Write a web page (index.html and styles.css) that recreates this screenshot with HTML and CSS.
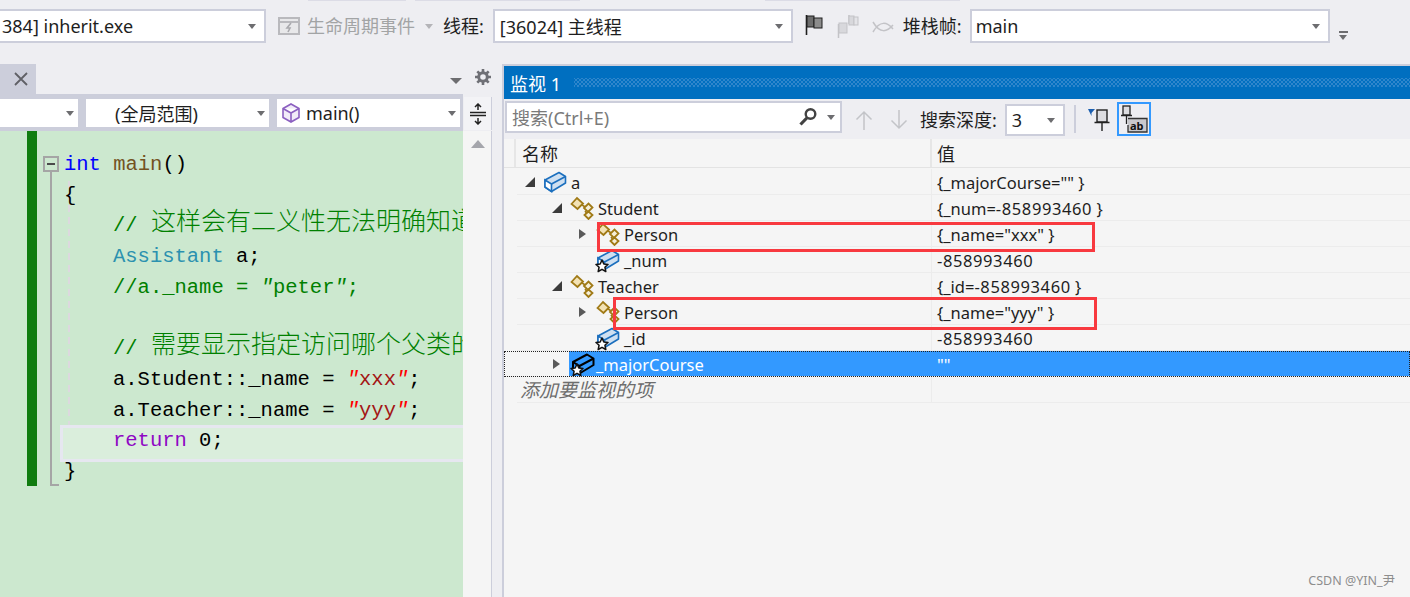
FILE: index.html
```html
<!DOCTYPE html>
<html lang="zh-CN">
<head>
<meta charset="utf-8">
<title>inherit.exe</title>
<link rel="stylesheet" href="styles.css">
</head>
<body>
<svg class="defs" width="0" height="0" aria-hidden="true">
  <symbol id="box" viewBox="0 0 24 24">
    <path d="M2 10 L16 2.500 L22.500 6.500 L22.500 13 L8.500 21.500 L2 17 Z" fill="#cfe0f1" stroke="#1b6fbe" stroke-width="1.600" stroke-linejoin="round"/>
    <path d="M2 10 L8.500 14 V21.500 L2 17 Z" fill="#fff" stroke="#1b6fbe" stroke-width="1.600"/>
    <path d="M8.500 14 L22.500 6.500" fill="none" stroke="#1b6fbe" stroke-width="1.600"/>
  </symbol>
  <symbol id="boxsel" viewBox="0 0 24 24">
    <path d="M2 10 L16 2.500 L22.500 6.500 L22.500 13 L8.500 21.500 L2 17 Z" fill="#3399ff" stroke="#000" stroke-width="2" stroke-linejoin="round"/>
    <path d="M2 10 L8.500 14 L22.500 6.500 M8.500 14 V21.500" fill="none" stroke="#000" stroke-width="2"/>
  </symbol>
  <symbol id="base" viewBox="0 0 24 24">
    <path d="M12 9 L17 12 M15 15 L18 19" fill="none" stroke="#a07a16" stroke-width="1.600"/>
    <path d="M1.500 8 L7 2 L13 7.500 L7.500 13 Z" fill="#f3e2b4" stroke="#a07a16" stroke-width="1.800"/>
    <path d="M14 12 L18.500 7.500 L22.500 11.500 L18 16 Z" fill="#f6efd8" stroke="#a07a16" stroke-width="1.800"/>
    <path d="M14.500 19 L18.500 15.500 L22.500 19 L18.500 23 Z" fill="#f6efd8" stroke="#a07a16" stroke-width="1.800"/>
  </symbol>
  <symbol id="star" viewBox="0 0 14 14">
    <path d="M7 1 L8.800 5 L13 5.400 L9.900 8.200 L10.800 12.500 L7 10.300 L3.200 12.500 L4.100 8.200 L1 5.400 L5.200 5 Z" fill="#fff" stroke="#111" stroke-width="1.500" stroke-linejoin="round"/>
  </symbol>
</svg>

<div class="top-marks">
  <span class="mark mark-a"></span><span class="mark mark-b"></span><span class="mark mark-c"></span>
</div>

<header class="toolbar">
  <div class="combo combo-process"><span class="combo-text">384] inherit.exe</span><i class="caret"></i></div>
  <svg class="ico-life" width="22" height="20" viewBox="0 0 22 20"><rect x="1" y="2" width="20" height="16" fill="#e8e8ea" stroke="#b9b9bd" stroke-width="2"/><path d="M1 6 H21" stroke="#b9b9bd" stroke-width="2"/><path d="M13 7 L9 12 H12 L10 16" fill="none" stroke="#a9a9ad" stroke-width="1.600"/></svg>
  <span class="tb-label disabled life-text">生命周期事件</span>
  <i class="caret caret-dim"></i>
  <span class="tb-label thread-label">线程:</span>
  <div class="combo combo-thread"><span class="combo-text">[36024] 主线程</span><i class="caret"></i></div>
  <svg class="ico-flag" width="19" height="22" viewBox="0 0 19 22"><path d="M1.500 1 V21" stroke="#1e1e1e" stroke-width="1.600"/><rect x="2" y="2" width="7" height="11" fill="#6d6d6d" stroke="#1e1e1e"/><rect x="9" y="4" width="8" height="10" fill="#8c8c8c" stroke="#1e1e1e"/></svg>
  <svg class="ico-flags" width="22" height="24" viewBox="0 0 22 24"><path d="M1.500 10 V24 M12 1 V10" stroke="#c3c3c7" stroke-width="1.500"/><rect x="2" y="9" width="8" height="10" fill="#d8d8dc" stroke="#c3c3c7"/><rect x="12" y="2" width="5" height="9" fill="#d8d8dc" stroke="#c3c3c7"/><rect x="17" y="3" width="4" height="8" fill="#e4e4e8" stroke="#c3c3c7"/></svg>
  <svg class="ico-fish" width="22" height="14" viewBox="0 0 22 14"><path d="M1 2 C8 14 15 12 21 5 M1 12 C8 0 15 2 21 9" fill="none" stroke="#c3c3c7" stroke-width="1.500"/></svg>
  <span class="tb-label stack-label">堆栈帧:</span>
  <div class="combo combo-stack"><span class="combo-text">main</span><i class="caret"></i></div>
  <div class="overflow"><b></b><i class="caret"></i></div>
</header>

<main class="work">
  <section class="editor">
    <div class="tabs">
      <div class="tab">
        <svg width="14" height="14" viewBox="0 0 14 14"><path d="M1 1 L13 13 M13 1 L1 13" stroke="#5f6066" stroke-width="1.800"/></svg>
      </div>
      <i class="caret caret-tab"></i>
      <svg class="gear" width="16" height="16" viewBox="0 0 16 16"><circle cx="8" cy="8" r="4.300" fill="none" stroke="#6f7076" stroke-width="3"/><path d="M8 0 V3 M8 13 V16 M0 8 H3 M13 8 H16 M2.300 2.300 L4.500 4.500 M11.500 11.500 L13.700 13.700 M13.700 2.300 L11.500 4.500 M4.500 11.500 L2.300 13.700" stroke="#6f7076" stroke-width="2.600"/></svg>
    </div>
    <div class="navrow">
      <div class="navbar">
        <div class="nav nav-1"><i class="caret"></i></div>
        <div class="nav nav-2"><span class="nav-text scope">(全局范围)</span><i class="caret"></i></div>
        <div class="nav nav-3">
          <svg width="18" height="20" viewBox="0 0 18 20"><path d="M9 1 L17 5.500 V14.500 L9 19 L1 14.500 V5.500 Z M1 5.500 L9 10 L17 5.500 M9 10 V19" fill="#f1ebf8" stroke="#8b5fc0" stroke-width="1.600"/></svg>
          <span class="nav-text">main()</span><i class="caret"></i>
        </div>
      </div>
      <div class="split">
        <svg width="20" height="22" viewBox="0 0 20 22"><path d="M2 9.500 H18 M2 12.500 H18" stroke="#222" stroke-width="1.500"/><path d="M10 1 V7 M10 15 V21 M7 4 L10 1 L13 4 M7 18 L10 21 L13 18" fill="none" stroke="#222" stroke-width="1.500"/></svg>
      </div>
    </div>
    <div class="editor-body">
      <div class="code">
        <div class="change-bar"></div>
        <div class="outline"></div>
        <div class="fold"></div>
        <div class="guide"></div>
        <div class="line"><span class="kw">int</span> <span class="fn">main</span>()</div>
        <div class="line">{</div>
        <div class="line in"><span class="cm">// <span class="cjk">这样会有二义性无法明确知道</span></span></div>
        <div class="line in"><span class="ty">Assistant</span> a;</div>
        <div class="line in"><span class="cm">//a._name = <span class="q">"</span>peter<span class="q">"</span>;</span></div>
        <div class="line in"></div>
        <div class="line in"><span class="cm">// <span class="cjk">需要显示指定访问哪个父类的成员</span></span></div>
        <div class="line in">a.Student::_name = <span class="q">"</span><span class="st">xxx</span><span class="q">"</span>;</div>
        <div class="line in">a.Teacher::_name = <span class="q">"</span><span class="st">yyy</span><span class="q">"</span>;</div>
        <div class="line in current"><span class="rt">return</span> 0;</div>
        <div class="line">}</div>
      </div>
      <div class="vscroll"><i class="caret caret-up"></i></div>
    </div>
  </section>

  <section class="watch">
    <div class="title"><span class="title-text">监视 1</span><span class="hatch"></span></div>
    <div class="watch-tools">
      <div class="search">
        <span class="search-text">搜索(Ctrl+E)</span>
        <svg class="mag" width="20" height="20" viewBox="0 0 20 20"><circle cx="12.500" cy="7" r="4.800" fill="none" stroke="#424242" stroke-width="2.400"/><path d="M8.800 11 L2.500 17.500" stroke="#424242" stroke-width="3.200"/></svg>
        <i class="caret"></i>
      </div>
      <svg class="nav-arrow up" width="18" height="20" viewBox="0 0 18 20"><path d="M9 20 V2 M1.500 9.500 L9 2 L16.500 9.500" fill="none" stroke="#c3c4c8" stroke-width="1.500"/></svg>
      <svg class="nav-arrow down" width="18" height="20" viewBox="0 0 18 20"><path d="M9 0 V18 M1.500 10.500 L9 18 L16.500 10.500" fill="none" stroke="#c3c4c8" stroke-width="1.500"/></svg>
      <span class="tb-label depth-label">搜索深度:</span>
      <div class="combo combo-depth"><span class="combo-text">3</span><i class="caret"></i></div>
      <span class="sep"></span>
      <svg class="pin" width="24" height="24" viewBox="0 0 24 24"><path d="M0 0 H7 L3.500 4 V7 H3.500 Z" fill="#1b5fb0"/><rect x="9" y="1" width="10" height="12" fill="#dcdce0" stroke="#222" stroke-width="1.400"/><path d="M6.500 13.500 H21.500 M14 14 V22" stroke="#222" stroke-width="1.400"/></svg>
      <div class="ab-btn">
        <svg width="30" height="30" viewBox="0 0 30 30"><rect x="4" y="2" width="7" height="9" fill="#dcdce0" stroke="#222" stroke-width="1.300"/><path d="M2 11.500 H13 M7.500 12 V20" stroke="#222" stroke-width="1.300"/><path d="M9 14.500 H28 V28 H9 V21" fill="#c9c9cd" stroke="#333" stroke-width="1.300"/><text x="11" y="26" class="ab">ab</text></svg>
      </div>
    </div>
    <div class="grid-head">
      <span class="gutter"></span>
      <span class="col-name">名称</span>
      <span class="col-val">值</span>
    </div>
    <div class="rows">
      <div class="row">
        <div class="name l0"><i class="tw open"></i><svg class="node"><use href="#box"/></svg><span>a</span></div>
        <div class="val">{_majorCourse="" }</div>
      </div>
      <div class="row">
        <div class="name l1"><i class="tw open"></i><svg class="node"><use href="#base"/></svg><span>Student</span></div>
        <div class="val">{_num=<span class="num">-858993460</span> }</div>
      </div>
      <div class="row">
        <div class="name l2"><i class="tw closed"></i><svg class="node"><use href="#base"/></svg><span>Person</span></div>
        <div class="val">{_name="xxx" }</div>
      </div>
      <div class="row">
        <div class="name l2"><i class="tw none"></i><span class="stack"><svg class="node"><use href="#box"/></svg><svg class="star"><use href="#star"/></svg></span><span>_num</span></div>
        <div class="val"><span class="num">-858993460</span></div>
      </div>
      <div class="row">
        <div class="name l1"><i class="tw open"></i><svg class="node"><use href="#base"/></svg><span>Teacher</span></div>
        <div class="val">{_id=<span class="num">-858993460</span> }</div>
      </div>
      <div class="row">
        <div class="name l2"><i class="tw closed"></i><svg class="node"><use href="#base"/></svg><span>Person</span></div>
        <div class="val">{_name="yyy" }</div>
      </div>
      <div class="row">
        <div class="name l2"><i class="tw none"></i><span class="stack"><svg class="node"><use href="#box"/></svg><svg class="star"><use href="#star"/></svg></span><span>_id</span></div>
        <div class="val"><span class="num">-858993460</span></div>
      </div>
      <div class="row selected">
        <div class="name l1"><i class="tw closed"></i><div class="sel-part"><span class="stack"><svg class="node"><use href="#boxsel"/></svg><svg class="star"><use href="#star"/></svg></span><span>_majorCourse</span></div></div>
        <div class="val">""</div>
      </div>
      <div class="row add">
        <div class="name l-add"><span>添加要监视的项</span></div>
        <div class="val"></div>
      </div>
      <div class="redbox red-1"></div>
      <div class="redbox red-2"></div>
    </div>
    <div class="stamp">CSDN @YIN_尹</div>
  </section>
</main>
</body>
</html>
```
FILE: styles.css
```css
* { box-sizing: border-box; }
html, body { margin: 0; height: 100%; }
body {
  width: 1410px;
  height: 597px;
  overflow: hidden;
  background: #eeeef2;
  color: #1e1e1e;
  font-family: "Noto Sans", "Noto Sans CJK SC", sans-serif;
  font-size: 18px;
  display: flex;
  flex-direction: column;
}
.defs { position: absolute; }
i { display: block; font-style: normal; }

.caret {
  width: 0; height: 0;
  border-left: 4.500px solid transparent;
  border-right: 4.500px solid transparent;
  border-top: 5px solid #6d6d70;
  flex: none;
}
.caret-dim { border-top-color: #b4b4b8; margin-left: 10px; margin-top: 15px; }

.top-marks { height: 1px; display: flex; flex: none; }
.mark { height: 1px; background: #dcdce6; }
.mark-a { margin-left: 308px; width: 98px; }
.mark-b { margin-left: 9px; width: 165px; }
.mark-c { margin-left: 185px; width: 195px; }

.toolbar {
  height: 63px;
  flex: none;
  display: flex;
  align-items: flex-start;
  padding-top: 8px;
}
.combo {
  height: 34px;
  background: #fff;
  border: 2px solid #cccedb;
  display: flex;
  align-items: center;
  justify-content: space-between;
  padding: 0 8px 0 4px;
  white-space: nowrap;
  flex: none;
}
.combo-process { width: 266px; border-left: 0; padding-left: 2px; }
.combo-thread { width: 300px; margin-left: 9px; padding-left: 5px; }
.combo-stack { width: 360px; margin-left: 8px; }
.tb-label { line-height: 34px; white-space: nowrap; flex: none; }
.disabled { color: #a2a4a5; }
.ico-life { margin: 7px 0 0 12px; flex: none; }
.life-text { margin-left: 7px; }
.thread-label { margin-left: 10px; }
.ico-flag { margin: 5px 0 0 12px; flex: none; }
.ico-flags { margin: 5px 0 0 13px; flex: none; }
.ico-fish { margin: 11px 0 0 13px; flex: none; }
.stack-label { margin-left: 9px; }
.overflow { margin: 22px 0 0 9px; flex: none; }
.overflow b { display: block; width: 9px; height: 2px; background: #6d6d70; margin-bottom: 2px; }

.work { flex: 1; display: flex; min-height: 0; }

.editor { width: 492px; flex: none; display: flex; flex-direction: column; }
.tabs { height: 30px; display: flex; align-items: center; flex: none; }
.tab {
  width: 36px; height: 30px;
  background: #cccedb;
  display: flex; align-items: center; justify-content: center;
  padding-left: 5px;
}
.caret-tab { margin-left: 414px; margin-top: 4px; border-left-width: 6px; border-right-width: 6px; border-top-width: 6px; }
.gear { margin-left: 13px; margin-top: -4px; }

.navrow { height: 37px; display: flex; flex: none; }
.navbar {
  width: 463px;
  background: #cccedb;
  display: flex;
  gap: 8px;
  padding: 5px 3px 3px 0;
}
.nav {
  background: #fff;
  height: 28px;
  display: flex;
  align-items: center;
  justify-content: space-between;
  padding-right: 4px;
}
.nav-1 { width: 78px; justify-content: flex-end; }
.nav-2 { width: 183px; }
.nav-3 { flex: 1; padding-left: 5px; gap: 6px; }
.nav-3 .caret { margin-left: auto; }
.nav-text { white-space: nowrap; }
.scope { margin-left: 29px; }
.split {
  flex: 1;
  margin: 3px 1px 1px 1px;
  background: #f3f3f6;
  display: flex; align-items: center; justify-content: center;
  box-shadow: 1px 0 0 #cccedb;
}

.editor-body { flex: 1; display: flex; min-height: 0; }
.code {
  position: relative;
  width: 463px;
  background: #cce8cf;
  padding-top: 19px;
  overflow: hidden;
  font-family: "Liberation Mono", "Noto Sans CJK SC", monospace;
  font-size: 20.500px;
  color: #000;
}
.line {
  position: relative;
  height: 30.700px;
  line-height: 30.700px;
  padding-left: 64px;
  white-space: pre;
}
.line.in { padding-left: 113px; }
.cjk {
  font-family: "Noto Sans CJK SC", sans-serif;
  font-size: 25px;
  font-weight: 300;
  line-height: 0;
  vertical-align: 1px;
  margin-left: 1px;
}
.kw { color: #0000ff; }
.fn { color: #74531f; }
.cm { color: #008000; }
.ty { color: #2b91af; }
.q { color: #ff0000; font-style: italic; }
.cm .q { color: inherit; }
.st { color: #a31515; }
.rt { color: #8f08c4; }
.current { isolation: isolate; }
.current::before {
  content: "";
  position: absolute;
  z-index: -1;
  left: 60px; top: -1px;
  width: 402px; height: 31px;
  background: #daeedc;
  border: 3px solid #e6e7f0;
}
.change-bar {
  position: absolute; left: 27px; top: 0; width: 10px; height: 355px;
  background: #107c10;
}
.outline {
  position: absolute; left: 50px; top: 40px; width: 9px; height: 315px;
  border-left: 2px solid #a5a5a5;
  border-bottom: 2px solid #a5a5a5;
}
.fold {
  position: absolute; left: 43px; top: 25px; width: 16px; height: 16px;
  border: 2px solid #a5a5a5;
  background: linear-gradient(#4a4a4a, #4a4a4a) center / 8px 2px no-repeat #cce8cf;
}
.guide {
  position: absolute; left: 68px; top: 50px; width: 2px; height: 270px;
  background: repeating-linear-gradient(#dcd9de 0 7px, transparent 7px 12px);
}
.vscroll {
  flex: 1;
  background: #f5f5f5;
  border-right: 1px solid #cccedb;
  padding: 9px 0 0 8px;
}
.caret-up {
  border-top: 0;
  border-left-width: 7px; border-right-width: 7px;
  border-bottom: 8px solid #a5a6ac;
}

.watch {
  position: relative;
  margin-left: 10px;
  flex: 1;
  min-width: 0;
  display: flex;
  flex-direction: column;
  border-top: 2px solid #cccedb;
  border-left: 2px solid #cccedb;
}
.title {
  height: 33px; flex: none;
  background: #006fc0;
  color: #fff;
  display: flex; align-items: center;
  padding-left: 6px;
}
.title-text { white-space: nowrap; }
.hatch {
  flex: 1;
  height: 9px;
  margin-left: 13px;
  background-image:
    radial-gradient(circle, #2f86cc 1px, transparent 1.100px),
    radial-gradient(circle, #2f86cc 1px, transparent 1.100px);
  background-size: 4px 4px;
  background-position: 0 0, 2px 2px;
}
.watch-tools { height: 40px; flex: none; display: flex; align-items: flex-start; padding: 2px 0 0 1px; }
.search {
  width: 337px; height: 32px;
  background: #fff;
  border: 2px solid #cccedb;
  display: flex; align-items: center;
  padding: 0 5px 0 5px;
  flex: none;
}
.search-text { color: #7a7a7a; flex: 1; }
.mag { margin-right: 9px; }
.nav-arrow { margin-top: 9px; flex: none; }
.up { margin-left: 13px; }
.down { margin-left: 17px; }
.depth-label { margin: 2px 0 0 12px; line-height: 34px; }
.combo-depth { width: 60px; height: 32px; margin: 3px 0 0 8px; padding-left: 5px; }
.sep { width: 2px; height: 28px; background: #cccedb; margin: 4px 0 0 9px; flex: none; }
.pin { margin: 8px 0 0 12px; flex: none; }
.ab-btn {
  width: 34px; height: 34px;
  margin: 1px 0 0 5px;
  border: 2px solid #3399ff;
  flex: none;
  display: flex; align-items: center; justify-content: center;
}
.ab { font: bold 11px "Noto Sans", sans-serif; fill: #111; }

.grid-head {
  height: 29px; flex: none;
  background: #f5f5f5;
  border-bottom: 1px solid #e3e3e3;
  display: flex;
  line-height: 31px;
}
.gutter { width: 12px; flex: none; border-right: 2px solid #e6e6e6; }
.col-name { width: 416px; flex: none; padding-left: 6px; border-right: 2px solid #e6e6e6; }
.col-val { padding-left: 5px; }

.rows { position: relative; flex: 1; background: #f5f5f5; padding-top: 1px; font-size: 16.500px; }
.row {
  position: relative;
  height: 26px;
  display: flex;
  align-items: stretch;
  line-height: 27px;
  margin-left: 13px;
  border-bottom: 1px solid #ececec;
  white-space: nowrap;
}
.name { width: 415px; flex: none; display: flex; align-items: center; border-right: 1px solid #ececec; }
.name span:last-child { padding-top: 2px; }
.val { padding-left: 5px; flex: 1; }
.num { letter-spacing: 0.600px; }
.l0 { padding-left: 8px; }
.l1 { padding-left: 35px; }
.l2 { padding-left: 61px; }
.l-add { padding-left: 3px; font-style: italic; color: #6d6d6d; font-size: 19px; }
.tw { width: 8px; height: 10px; flex: none; margin-right: 10px; }
.tw.open {
  width: 0; height: 0;
  margin-right: 8px;
  border-left: 10px solid transparent;
  border-bottom: 10px solid #3c3c3c;
}
.tw.closed {
  width: 0; height: 0;
  margin-left: 1px;
  margin-right: 10px;
  border-top: 5.500px solid transparent;
  border-bottom: 5.500px solid transparent;
  border-left: 7px solid #5a5a5a;
  position: relative;
}
.node { width: 24px; height: 24px; flex: none; margin-right: 4px; }
.stack { position: relative; display: block; width: 24px; height: 24px; flex: none; margin-right: 4px; }
.stack .node { margin: 0; display: block; }
.star { position: absolute; left: -1px; bottom: -1px; width: 14px; height: 14px; }
.selected { margin-left: 0; padding-left: 13px; outline: 1px dotted #222; outline-offset: -1px; }
.selected .name { border-right: 0; }
.selected .sel-part {
  flex: 1;
  height: 100%;
  background: #3399ff;
  color: #fff;
  display: flex; align-items: center;
  padding-left: 2px;
}
.selected .stack { margin-right: 1px; }
.selected .tw.closed { margin-right: 9px; }
.selected .val { background: #3399ff; color: #fff; }

.redbox { position: absolute; border: 3px solid #f8393f; pointer-events: none; }
.red-1 { left: 93px; top: 54px; width: 498px; height: 30px; }
.red-2 { left: 109px; top: 129px; width: 484px; height: 33px; }

.stamp {
  position: absolute;
  right: 15px; bottom: 8px;
  font-size: 12.500px;
  color: #8d8d8d;
  white-space: nowrap;
}
```
